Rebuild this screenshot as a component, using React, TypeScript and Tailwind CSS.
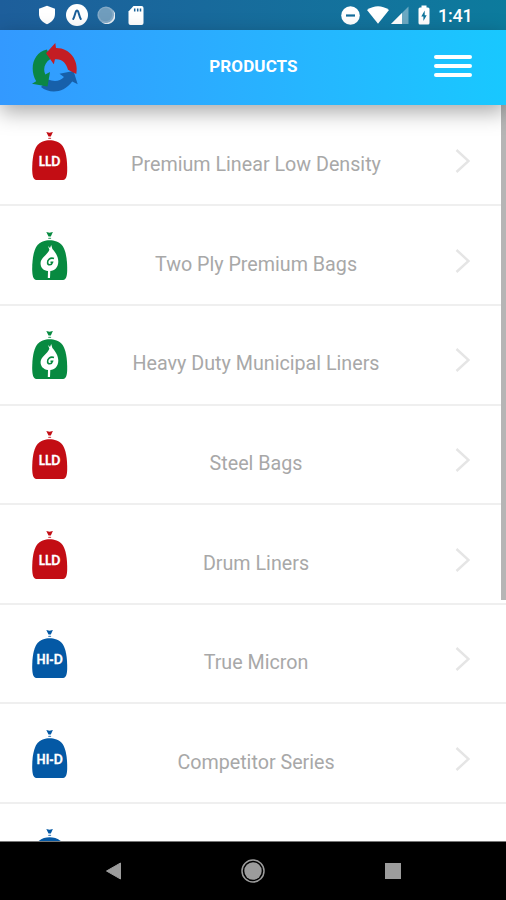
type BagKind = "lld" | "leaf" | "hid";

const products: { id: number; title: string; kind: BagKind; label: string }[] = [
  { id: 1, title: "Premium Linear Low Density", kind: "lld", label: "LLD" },
  { id: 2, title: "Two Ply Premium Bags", kind: "leaf", label: "" },
  { id: 3, title: "Heavy Duty Municipal Liners", kind: "leaf", label: "" },
  { id: 4, title: "Steel Bags", kind: "lld", label: "LLD" },
  { id: 5, title: "Drum Liners", kind: "lld", label: "LLD" },
  { id: 6, title: "True Micron", kind: "hid", label: "HI-D" },
  { id: 7, title: "Competitor Series", kind: "hid", label: "HI-D" },
  { id: 8, title: "", kind: "hid", label: "" },
];

const bagColors: Record<BagKind, string> = {
  lld: "#c30d14",
  leaf: "#078a40",
  hid: "#0459a5",
};

function BagIcon({ kind, label }: { kind: BagKind; label: string }) {
  return (
    <svg viewBox="0 0 36 50" className="w-9 h-[50px] shrink-0">
      <g fill={bagColors[kind]}>
        <path d="M14.3 1 L17.5 1.8 L20.9 1 L18.8 5.4 H16.5 Z" />
        <path d="M16.6 6.8 H18.7 L19.3 8 H16 Z" opacity=".7" />
        <path d="M17.6 9.3 C22 9.3 27.5 10.8 30.6 15 C34 20 35.2 29 35.2 38 C35.2 44 34.5 48.9 31 48.9 H4.4 C1 48.9 .2 44 .2 38 C.2 29 1.4 20 4.8 15 C8 10.8 13.2 9.3 17.6 9.3 Z" />
      </g>
      {kind === "leaf" && (
        <>
          <path
            d="M19.2 14 L20.4 18 C23.4 21.5 26.3 25.5 26.3 30.5 C26.3 36.3 22.5 40 18.3 40 L18 47 H15.8 L16 40 C11.5 39.6 8.3 36.3 8.6 31.8 C9 26.5 15.5 24 17.4 18.8 L16 15 L18 17 Z"
            fill="#fff"
          />
          <path
            d="M22 27.5 C18 26.3 15.3 28.8 15.6 31.8 C15.9 34.6 19.6 34.5 20.5 31.3 H18.5"
            fill="none"
            stroke="#078a40"
            strokeWidth="1.6"
          />
        </>
      )}
      {label && (
        <text
          x="17.6"
          y="34.6"
          textAnchor="middle"
          textLength={kind === "lld" ? 21.5 : 26}
          lengthAdjust="spacingAndGlyphs"
          fill="#fff"
          stroke="#fff"
          strokeWidth=".3"
          className="font-[Lato,sans-serif] font-black text-[14px]"
        >
          {label}
        </text>
      )}
    </svg>
  );
}

function Logo() {
  return (
    <svg viewBox="30 40 50 52" className="w-[50px] h-[52px]">
      <path
        d="M41 85 C49 91.5 63 92 72.2 79.5 L77.7 82.3 L73.5 69 L59.5 71.8 L64 75 C60 79.5 54 79.8 48 77.5 Z"
        fill="#1760aa"
      />
      <path
        d="M47 47.5 C33 50.5 29 67 36.2 79.3 L32 81.8 L47.5 84.5 L50 70 L45.3 72.5 C42.8 67 44.5 60.5 50.5 57 Z"
        fill="#0b8645"
      />
      <path
        d="M55.3 41 L46 51.3 L53.8 62.3 L55 57.3 C62 56.5 66.5 61.5 68 67.8 L76.3 72 C79 58.5 70 45.8 56 46 Z"
        fill="#c41d24"
      />
    </svg>
  );
}

function StatusBar() {
  return (
    <div className="h-[30px] shrink-0 flex items-center justify-between pl-[39px] pr-[33px] bg-linear-to-r from-[#1d5e9b] to-[#0c7b9d]">
      <div className="flex items-center">
        <svg viewBox="0 0 16 20" className="w-4 h-5">
          <path d="M8 .8 L16 3.7 V9 C16 14 12.5 17.5 8 19.2 C3.5 17.5 0 14 0 9 V3.7 Z" fill="#fff" />
        </svg>
        <svg viewBox="0 0 22 22" className="w-[22px] h-[22px] ml-[11px]">
          <circle cx="11" cy="11" r="11" fill="#fff" />
          <path
            d="M7.2 15 C8.7 12.5 9.3 8 10.2 7 Q11 6.3 11.8 7 C12.7 8 13.3 12.5 14.8 15"
            fill="none"
            stroke="#1b5f99"
            strokeWidth="2"
            strokeLinecap="round"
          />
        </svg>
        <svg viewBox="0 0 18 18" className="w-[18px] h-[18px] ml-[9px]">
          <circle cx="9" cy="9" r="8.6" fill="#86abc8" />
          <path d="M15.5 3.5 A8.2 8.2 0 0 1 4.5 16.1 A8.6 8.6 0 0 0 15.5 3.5" fill="#e6eef5" />
          <circle cx="8.5" cy="8.5" r="6.7" fill="#709dbd" />
        </svg>
        <svg viewBox="0 0 16 19" className="w-4 h-[19px] ml-[13px]">
          <path d="M5.5 0 H13.5 Q15.5 0 15.5 2 V17 Q15.5 19 13.5 19 H2.5 Q.5 19 .5 17 V5.5 Z" fill="#fff" />
          <path d="M6.7 2.5 V5.5 M9.7 2.5 V5.5 M12.5 2.5 V5.5" stroke="#1a6399" strokeWidth="1.5" />
        </svg>
      </div>
      <div className="flex items-center">
        <svg viewBox="0 0 19 19" className="w-[19px] h-[19px] mr-px">
          <circle cx="9.5" cy="9.5" r="9.3" fill="#fff" />
          <path d="M5 9.5 H14" stroke="#146d9b" strokeWidth="2.2" />
        </svg>
        <svg viewBox="0 0 22 18" className="w-[22px] h-[18px] ml-1.5">
          <path d="M0 4 Q11 -3.5 22 4 L11 17.8 Z" fill="#fff" />
        </svg>
        <svg viewBox="0 0 18 18" className="w-[18px] h-[18px] ml-0.5">
          <path d="M0 18 L17.5 .5 V18 Z" fill="#6ba9c3" />
          <path d="M0 18 L11 7 V18 Z" fill="#fff" />
        </svg>
        <svg viewBox="0 0 12 20" className="w-3 h-5 ml-[9px]">
          <path d="M3.5 .5 H8.5 V2.5 H10 Q11.5 2.5 11.5 4 V18 Q11.5 19.5 10 19.5 H2 Q.5 19.5 .5 18 V4 Q.5 2.5 2 2.5 H3.5 Z" fill="#fff" />
          <path d="M6.7 5.5 L3.3 11.6 H5.4 V16 L8.7 10.2 H6.7 Z" fill="#0e749b" />
        </svg>
        <span className="ml-2 w-[35px] pt-0.5 whitespace-nowrap text-[18px] leading-none font-medium text-white tracking-[-0.2px]">
          1:41
        </span>
      </div>
    </div>
  );
}

function Header() {
  return (
    <header className="relative z-10 h-[75px] shrink-0 flex items-center justify-between pl-[30px] pr-[34px] bg-linear-to-r from-[#3399ff] to-[#18c8ff] shadow-[0_7px_20px_rgba(0,0,0,0.34)]">
      <Logo />
      <h1 className="mr-[7px] mt-[-2px] text-[17px] font-bold text-white tracking-[0.1px]">PRODUCTS</h1>
      <button className="w-[38px] flex flex-col gap-[5px] mt-[-3px]">
        <span className="h-1 w-full rounded-full bg-white" />
        <span className="h-1 w-full rounded-full bg-white" />
        <span className="h-1 w-full rounded-full bg-white" />
      </button>
    </header>
  );
}

export default function App() {
  return (
    <div className="w-[506px] h-[900px] flex flex-col overflow-hidden bg-white font-[Roboto,sans-serif]">
      <StatusBar />
      <Header />

      {/* Product list */}
      <main className="relative flex-1 min-h-0 overflow-hidden border-b border-[#777] pt-[1.6px]">
        {products.map((product) => (
          <div
            key={product.id}
            className="h-[99.65px] flex items-start pl-8 pr-[35px] pt-[24.4px] border-b-2 border-[#efefef]"
          >
            <BagIcon kind={product.kind} label={product.label} />
            <span className="flex-1 mr-[11px] mt-5 text-center text-[19.7px] leading-[28px] text-[#a8a8a8]">
              {product.title}
            </span>
            <svg viewBox="0 0 16 26" className="w-4 h-[26px] mt-[17px]">
              <path d="M1.5 2 L13.5 13 L1.5 24" fill="none" stroke="#e5e5e5" strokeWidth="2.4" />
            </svg>
          </div>
        ))}
        {/* Scroll indicator */}
        <div className="absolute top-0 right-0 w-[5px] h-[495px] bg-[#b5b5b5]" />
      </main>

      {/* Android navigation */}
      <nav className="h-[58px] shrink-0 flex items-center justify-between px-[105px] bg-black">
        <svg viewBox="0 0 17 18" className="w-[17px] h-[18px]">
          <path d="M1.5 9 L15.5 1 V17 Z" fill="#9c9c9c" stroke="#9c9c9c" strokeLinejoin="round" />
        </svg>
        <svg viewBox="0 0 24 24" className="w-6 h-6 mr-px">
          <circle cx="12" cy="12" r="11" fill="none" stroke="#9c9c9c" strokeWidth="1.5" />
          <circle cx="12" cy="12" r="8.7" fill="#9c9c9c" />
        </svg>
        <div className="w-4 h-4 bg-[#9c9c9c]" />
      </nav>
    </div>
  );
}
